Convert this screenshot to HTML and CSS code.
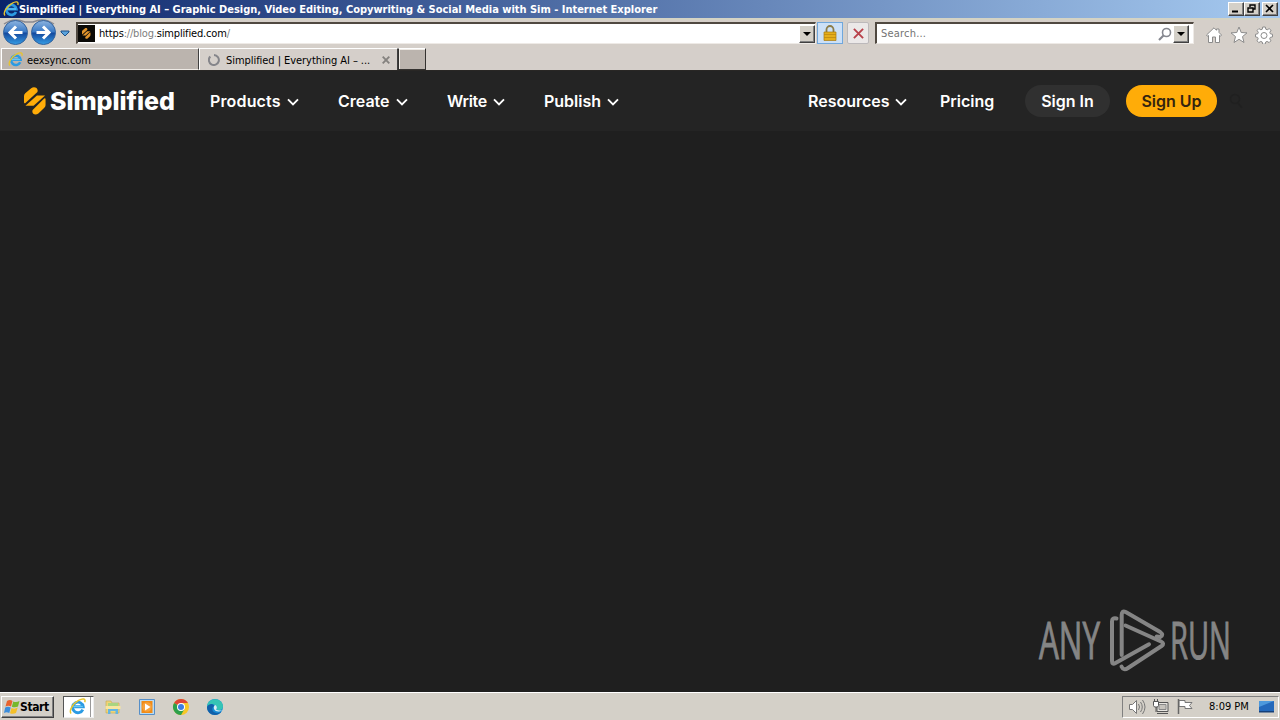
FILE: index.html
```html
<!DOCTYPE html>
<html lang="en">

<head>
    <meta charset="UTF-8">
    <title>Simplified</title>
    <link rel="stylesheet" href="styles.css">
</head>

<body>
    <!-- Shared icons -->
    <svg class="defs" width="0" height="0">
        <symbol id="ie" viewBox="0 0 16 16">
            <path d="M13 11A5 5 0 1 1 13.400 8.200H5" fill="none" stroke="#2b9be3" stroke-width="2.700"/>
            <path d="M4 8h9" stroke="#66c8f5" stroke-width="1.200"/>
            <path d="M2 14.500C-.5 12 4 5 9 2.300 13-.1 16 .5 14.800 4" fill="none" stroke="#e8c52c" stroke-width="1.400"/>
        </symbol>
        <symbol id="bolt" viewBox="0 0 24 29">
            <path d="M0 9.500a4 4 0 0 1 1.300-3L7.500 1.300C10.500-1.200 15.500 1 14 5L1.500 16.500Q0 17.500 0 15.500z"/>
            <path d="M1.500 19.500 13.500 8.800H22L10 19.500z"/>
            <path d="M22.500 18.500a4 4 0 0 1-1.300 3L15 27.500C12 30 7.500 28 9 24L21 12q1.500-1 1.500 1z"/>
        </symbol>
        <symbol id="chevron" viewBox="0 0 12 8">
            <path d="M1 1.300 6 6.300 11 1.300" fill="none" stroke="#fff" stroke-width="1.900"/>
        </symbol>
        <symbol id="flag" viewBox="0 0 16 16">
            <path d="M3 2Q6 0 8.500 2L7 7.500Q4.500 6 1.500 7.500z" fill="#e8622d"/>
            <path d="M9.300 2.400Q12 4 15.500 2L14 7.500Q11 9 7.800 7.700z" fill="#76b82a"/>
            <path d="M1.200 8.500Q4 7 6.700 8.500L5.300 14Q2.500 12.500 0 14z" fill="#3c8ddb"/>
            <path d="M7.500 8.900Q10.500 10.500 13.700 8.600L12 14Q9 15.500 6 14.200z" fill="#f5c028"/>
        </symbol>
    </svg>

    <!-- Title bar -->
    <header class="titlebar">
        <svg class="title-icon"><use href="#ie"/></svg>
        <span class="title">Simplified | Everything AI – Graphic Design, Video Editing, Copywriting &amp; Social Media with Sim - Internet Explorer</span>
        <div class="window-buttons">
            <span class="win-btn"><svg viewBox="0 0 13 11"><path d="M3 8.500h6" stroke="#000" stroke-width="2"/></svg></span>
            <span class="win-btn"><svg viewBox="0 0 13 11"><path d="M5 4V2h5v4H8M5 2h5M3 5h5v4H3zM3 5h5" fill="none" stroke="#000" stroke-width="1.400"/></svg></span>
            <span class="win-btn close"><svg viewBox="0 0 13 11"><path d="m3 2 7 7m0-7-7 7" stroke="#000" stroke-width="1.600"/></svg></span>
        </div>
    </header>

    <!-- Navigation row -->
    <div class="toolbar">
        <svg class="arrows" viewBox="0 0 58 28">
            <defs>
                <linearGradient id="ball" x2="0" y2="1">
                    <stop offset="0" stop-color="#8db4df"/>
                    <stop offset=".48" stop-color="#3878c5"/>
                    <stop offset=".52" stop-color="#14489d"/>
                    <stop offset="1" stop-color="#369de5"/>
                </linearGradient>
            </defs>
            <path d="M4 5Q14-2 25 3h8Q44-2 54 5" fill="none" stroke="#8b8b91" stroke-width="1.500"/>
            <circle cx="15.500" cy="13.500" r="12" fill="url(#ball)" stroke="#34639d"/>
            <circle cx="43.500" cy="13.500" r="12" fill="url(#ball)" stroke="#34639d"/>
            <path d="M22.500 13.500h-12m5.500-6-6 6 6 6M36.500 13.500h12m-5.500-6 6 6-6 6" fill="none" stroke="#fff" stroke-width="3"/>
        </svg>
        <svg class="history" viewBox="0 0 10 7"><path d="M1 1h8v1L5 6 1 2z" fill="#5aa3dc" stroke="#1c4f88"/></svg>
        <div class="address">
            <span class="favicon"><svg viewBox="0 0 24 29"><use href="#bolt"/></svg></span>
            <span class="url"><b>https</b>://blog.<b>simplified.com</b>/</span>
            <span class="drop"><i></i></span>
        </div>
        <span class="lock">
            <svg viewBox="0 0 14 16">
                <path d="M3.500 8V4.500a3.500 3.500 0 0 1 7 0V8" fill="none" stroke="#8c7c48" stroke-width="1.800"/>
                <path d="M1 7h12v8.500H1z" fill="#e5ae1c" stroke="#a87a10" stroke-width=".7"/>
                <path d="M1 9.500h12M1 12.500h12" stroke="#b98410" stroke-width=".7"/>
            </svg>
        </span>
        <span class="stop"><svg viewBox="0 0 12 12"><path d="m1 1 10 10m0-10L1 11" stroke="#b8414b" stroke-width="2.100"/></svg></span>
        <div class="search">
            <span class="hint">Search...</span>
            <svg class="glass" viewBox="0 0 14 14"><circle cx="8.500" cy="5.500" r="4" fill="none" stroke="#85878f" stroke-width="1.600"/><path d="M5.500 8.500 1 13" stroke="#85878f" stroke-width="2.200"/></svg>
            <span class="drop"><i></i></span>
        </div>
        <div class="tools">
            <svg viewBox="0 0 18 18"><path d="M1.500 9 9 1.800l2.500 2.500V3h2.500v3.500L16.500 9l-1 1.200-1-.8V16.500h-4V11h-3v5.500h-4V9.400l-1 .8z"/></svg>
            <svg viewBox="0 0 18 18"><path d="m9 1 2.200 5.500 5.800.4-4.500 3.700L14 16.500l-5-3.200-5 3.200 1.500-5.900L1 6.900l5.800-.4z"/></svg>
            <svg viewBox="0 0 18 18"><path d="M7.700 1h2.600l.5 2.200 1.400.6 2-1.200 1.800 1.800-1.200 2 .6 1.400 2.100.5v2.600l-2.200.5-.6 1.400 1.200 2-1.800 1.800-2-1.200-1.400.6-.5 2.200H7.700l-.5-2.200-1.400-.6-2 1.200L2 14.800l1.200-2-.6-1.400-2.100-.5V8.300l2.200-.5.6-1.400-1.200-2 1.800-1.800 2 1.200 1.400-.6z"/><circle cx="9" cy="9.500" r="3"/></svg>
        </div>
    </div>

    <!-- Tabs -->
    <div class="tabs">
        <div class="tab inactive">
            <svg class="tab-icon"><use href="#ie"/></svg>
            <span class="tab-one">eexsync.com</span>
        </div>
        <div class="tab active">
            <svg class="spinner" viewBox="0 0 12 12"><path d="M2.300 2.500A5 5 0 1 0 6 1" fill="none" stroke="#85858a" stroke-width="2"/></svg>
            <span class="tab-two">Simplified | Everything AI – ...</span>
            <svg class="tab-close" viewBox="0 0 8 8"><path d="m.7.700 6.600 6.600m0-6.600L.7 7.300" stroke="#85827f" stroke-width="1.900"/></svg>
        </div>
        <div class="new-tab"></div>
    </div>

    <!-- Web page -->
    <main class="page">
        <nav class="site-nav">
            <svg class="brand-icon"><use href="#bolt"/></svg>
            <span class="brand">Simplified</span>
            <a class="item products">Products<svg><use href="#chevron"/></svg></a>
            <a class="item create">Create<svg><use href="#chevron"/></svg></a>
            <a class="item write">Write<svg><use href="#chevron"/></svg></a>
            <a class="item publish">Publish<svg><use href="#chevron"/></svg></a>
            <a class="item resources">Resources<svg><use href="#chevron"/></svg></a>
            <a class="item pricing">Pricing</a>
            <a class="pill signin">Sign In</a>
            <a class="pill signup">Sign Up</a>
            <svg class="site-search" viewBox="0 0 14 16"><circle cx="6" cy="6" r="4.500"/><path d="m9 10 4 5"/></svg>
        </nav>
        <!-- Watermark -->
        <svg class="watermark" viewBox="0 0 200 64">
            <text x="2" y="51" textLength="61" lengthAdjust="spacingAndGlyphs">ANY</text>
            <g fill="none" stroke="#858585" stroke-width="4" stroke-linejoin="round" stroke-linecap="round">
                <path d="M79.500 10.500q-4.500-1-4.500 3V53q0 4 3.500 2L112 36.300"/>
                <path d="M84.700 47V7q0-5 4-3l34.500 20q4 3 0 5l-3.500-.5"/>
                <path d="m88.500 17.500 35.500 16q4 2 .5 4.500L91 60q-4.500 3-6.500-1.500"/>
            </g>
            <text x="133" y="51" textLength="61" lengthAdjust="spacingAndGlyphs">RUN</text>
        </svg>
    </main>

    <!-- Taskbar -->
    <footer class="taskbar">
        <div class="start"><svg><use href="#flag"/></svg><span>Start</span></div>
        <div class="task-active"><svg><use href="#ie"/></svg><i></i></div>
        <div class="quick">
            <svg viewBox="0 0 18 18"><path d="M2 3h5l1 2h7v10H2z" fill="#f0d477" stroke="#c1a950" stroke-width=".6"/><path d="M4 5h10v4H4z" fill="#a9d580"/><path d="M1.500 8h15v3H1.500z" fill="#f7e6a1"/><path d="M4 16v-5h10v5h-2.500v-3h-5v3z" fill="#63b5e2"/></svg>
            <svg viewBox="0 0 18 18"><path d="M1.500 1.500h15v15h-15z" fill="#b9dbf3" stroke="#568fc8"/><path d="M3.500 3h11v12h-11z" fill="#f18b16"/><circle cx="9" cy="9" r="4.800" fill="#f7a13a"/><path d="m7 5.500 5.500 3.500L7 12.500z" fill="#fff"/></svg>
            <svg viewBox="0 0 18 18"><circle cx="9" cy="9" r="8" fill="#f7c726"/><path d="M9 9 2.070 5A8 8 0 0 1 15.930 5H9z" fill="#dd4537"/><path d="M2.070 5A8 8 0 0 0 9 17l3.500-6L9 9z" fill="#2da04c"/><circle cx="9" cy="9" r="4" fill="#fff"/><circle cx="9" cy="9" r="3" fill="#3c7de2"/></svg>
            <svg viewBox="0 0 18 18"><circle cx="9" cy="9" r="8" fill="#168bd5"/><path d="M1.200 7.500C2.500-1 16-1 17 8c.2 4-4 5-6.500 3.500 1-2 0-4.500-3-5C5 6 2 7 1.200 9z" fill="#35c4b5"/><path d="M1 9c2-4 7-3.500 7-1-3 2-2 7 3 7 2 0 3.500-.8 4.500-1.500C12 19 1 18 1 9z" fill="#1160a9"/><path d="M10 11.500c1.500-1 1-4-1-4.500-3 3 0 7 4 6.500 1.500-.2 3-1 3.500-1.500-2 .8-4.500.8-6.500-.5z" fill="#d9eef2"/></svg>
        </div>
        <div class="tray">
            <svg viewBox="0 0 18 18"><path d="M1.500 6.500h3l4-4v13l-4-4h-3z" fill="#fff" stroke="#777"/><path d="M10.500 6q2 3 0 6m2-8q3.500 5 0 10m2-12q5 7 0 14" fill="none" stroke="#777"/></svg>
            <svg viewBox="0 0 18 18"><path d="M5 4.500h11v9H5zM5 15.500h11" fill="#e8e6e1" stroke="#555"/><path d="M7 6.500h7v5H7z" fill="#c6c3bd" stroke="#888"/><path d="M1.500 3.500h5v4l-1 1.500h-3l-1-1.500zM2.500 1v3m3-3v3M4 9v5" fill="#fff" stroke="#555"/></svg>
            <svg viewBox="0 0 18 18"><path d="M3 2.500h6v2h7l-2.500 3 2.500 3H9v-2H3z" fill="#fff" stroke="#777"/><path d="M2.500 1v15" stroke="#666" stroke-width="1.500"/></svg>
            <time>8:09 PM</time>
            <svg class="desktop" viewBox="0 0 18 18"><path d="M2 3h15v10H2z" fill="#2469bb"/><path d="M2 3h15L2 9z" fill="#4d99dc"/><path d="M2 13h15v1.500H2z" fill="#164079"/></svg>
        </div>
    </footer>
</body>

</html>
```
FILE: styles.css
```css
* {
    box-sizing: border-box;
}

body {
    margin: 0;
    width: 1280px;
    height: 720px;
    overflow: hidden;
    display: flex;
    flex-direction: column;
    background: #d4d0c8;
    font: 11px "DejaVu Sans Condensed", "DejaVu Sans", sans-serif;
    color: #000;
    white-space: nowrap;
}

svg {
    display: block;
    flex: none;
}

.defs {
    position: absolute;
}

/* Title bar */
.titlebar {
    height: 18px;
    flex: none;
    display: flex;
    align-items: center;
    padding: 0 2px 0 3px;
    background: linear-gradient(to right, #0a246a, #a6caf0);
    color: #fff;
    font-weight: bold;
}

.title-icon {
    width: 16px;
    height: 16px;
}

.title {
    letter-spacing: -0.01px;
}

.window-buttons {
    display: flex;
    margin-left: auto;
}

.win-btn {
    width: 16px;
    height: 14px;
    background: #d4d0c8;
    border: 1px solid;
    border-color: #fff #404040 #404040 #fff;
    box-shadow: inset -1px -1px #808080;
}

.win-btn svg {
    width: 13px;
    height: 11px;
}

.close {
    margin-left: 2px;
}

/* Address row */
.toolbar {
    height: 30px;
    flex: none;
    display: flex;
    align-items: center;
    padding-bottom: 2px;
    background: #d5cfc9;
    border-top: 2px solid #d4d3c4;
}

.arrows {
    width: 58px;
    height: 28px;
}

.history {
    width: 10px;
    height: 7px;
    margin: 0 6px 0 2px;
}

.address,
.search {
    height: 22px;
    display: flex;
    align-items: center;
    background: #fff;
    border: 1px solid #eeeae6;
    border-top: 2px solid #504941;
    border-left: 2px solid #504941;
}

.address {
    width: 740px;
}

.favicon {
    width: 17px;
    height: 17px;
    margin-right: 4px;
    background: #0b0a08;
}

.favicon svg {
    width: 11px;
    height: 11px;
    margin: 3px;
    fill: #e2942c;
}

.url {
    color: #808080;
    letter-spacing: -0.17px;
}

.url b {
    color: #000;
    font-weight: normal;
}

.drop {
    width: 16px;
    height: 18px;
    margin-left: auto;
    display: flex;
    align-items: center;
    justify-content: center;
    background: #d4d0c8;
    border: 1px solid;
    border-color: #fff #404040 #404040 #fff;
    box-shadow: inset -1px -1px #808080;
}

.drop i {
    border: 4px solid transparent;
    border-top-color: #000;
    border-bottom: 0;
}

.lock {
    width: 26px;
    height: 22px;
    margin-left: 1px;
    padding: 2px 5px;
    background: #cce0f7;
    border: 1px solid #70a7dc;
}

.lock svg {
    width: 14px;
    height: 16px;
}

.stop {
    width: 22px;
    height: 22px;
    margin-left: 4px;
    padding: 5px;
    background: #ebe8e8;
    border: 1px solid #bcb9bb;
    border-radius: 2px;
}

.stop svg {
    width: 11px;
    height: 11px;
}

.search {
    width: 319px;
    margin-left: 6px;
    padding: 0 4px 0 4px;
}

.hint {
    color: #737373;
    letter-spacing: 0.2px;
}

.glass {
    width: 14px;
    height: 14px;
    margin-left: auto;
}

.search .drop {
    margin-left: 1px;
}

.tools {
    display: flex;
    gap: 7px;
    margin: 3px 0 0 11px;
}

.tools svg {
    width: 18px;
    height: 18px;
    fill: #fff;
    stroke: #8b8b8b;
    stroke-width: 1;
}

/* Tabs */
.tabs {
    height: 23px;
    flex: none;
    display: flex;
    background: #d5cfca;
    border-bottom: 1px solid #292725;
}

.tab {
    display: flex;
    align-items: center;
    height: 22px;
    border-top: 1px solid #fff;
    border-left: 1px solid #fff;
    border-right: 1px solid #404040;
    padding-top: 1px;
}

.inactive {
    width: 198px;
    margin-left: 1px;
    background: #bbb4ae;
    border-bottom: 1px solid #eeeae5;
}

.active {
    width: 199px;
}

.tab-icon {
    width: 15px;
    height: 15px;
    margin: 0 4px 0 6px;
}

.tab-one {
    padding-top: 1px;
    letter-spacing: -0.1px;
}

.tab-two {
    letter-spacing: -0.05px;
}

.spinner {
    width: 12px;
    height: 12px;
    margin: 0 6px 0 8px;
}

.tab-close {
    width: 8px;
    height: 8px;
    margin-left: auto;
    margin-right: 7px;
}

.new-tab {
    width: 28px;
    height: 22px;
    background: #bbb4ae;
    border: 1px solid #343230;
    border-top-color: #fff;
    box-shadow: inset 1px 1px #efebe6;
}

/* Web page */
.page {
    flex: 1;
    display: flex;
    flex-direction: column;
    background: #1f1f1f;
}

.site-nav {
    height: 60px;
    display: flex;
    align-items: center;
    padding-left: 24px;
    padding-bottom: 1px;
    background: #242424;
    color: #fff;
    font: 600 16px Inter, sans-serif;
}

.brand-icon {
    width: 23px;
    height: 28px;
    fill: #ffac08;
}

.brand {
    width: 125px;
    margin: 0 35px 0 3px;
    font-size: 25px;
    font-weight: 800;
    letter-spacing: -0.05px;
}

.item {
    display: flex;
    align-items: center;
    justify-content: space-between;
}

.item svg {
    width: 12px;
    height: 8px;
    margin-top: 2px;
}

.products {
    width: 89px;
    margin-right: 39px;
    letter-spacing: 0.15px;
}

.create {
    width: 70px;
    margin-right: 39px;
}

.write {
    width: 58px;
    margin-right: 39px;
    letter-spacing: -0.3px;
}

.publish {
    width: 75px;
}

.resources {
    width: 99px;
    margin-left: auto;
    margin-right: 33px;
}

.pricing {
    width: 55px;
    margin-right: 30px;
}

.pill {
    height: 32px;
    display: flex;
    align-items: center;
    justify-content: center;
    border-radius: 16px;
}

.signin {
    width: 85px;
    background: #303030;
}

.signup {
    width: 91px;
    margin-left: 16px;
    background: #ffac08;
    color: #33240f;
}

.site-search {
    width: 14px;
    height: 16px;
    margin: 0 37px 0 12px;
    fill: none;
    stroke: #202020;
    stroke-width: 1.5;
}

.watermark {
    width: 200px;
    height: 64px;
    margin: auto 43px 20px auto;
}

.watermark text {
    font: 51px "Open Sans", sans-serif;
    fill: #858585;
    stroke: #858585;
    stroke-width: 1;
}

/* Taskbar */
.taskbar {
    height: 28px;
    flex: none;
    display: flex;
    align-items: center;
    background: #d4d0c8;
    border-top: 1px solid #fff;
}

.start {
    width: 53px;
    height: 22px;
    margin-left: 1px;
    display: flex;
    align-items: center;
    padding-left: 2px;
    border: 1px solid;
    border-color: #fff #404040 #404040 #fff;
    box-shadow: inset -1px -1px #808080;
    font-size: 12px;
    font-weight: bold;
    letter-spacing: -0.4px;
}

.start svg {
    width: 16px;
    height: 16px;
}

.task-active {
    width: 31px;
    height: 22px;
    margin-left: 9px;
    display: flex;
    align-items: center;
    justify-content: space-between;
    padding: 0 0 0 5px;
    background: #fff;
    border: 1px solid #eee;
    border-top-color: #555;
    border-left-color: #555;
}

.task-active svg {
    width: 17px;
    height: 17px;
}

.task-active i {
    width: 3px;
    height: 20px;
    border-left: 1px solid #999;
}

.quick {
    display: flex;
    gap: 16px;
    margin-left: 10px;
}

.quick svg {
    width: 18px;
    height: 18px;
}

.tray {
    width: 157px;
    height: 22px;
    margin-left: auto;
    margin-right: 1px;
    display: flex;
    align-items: center;
    gap: 6px;
    padding-left: 5px;
    border: 1px solid;
    border-color: #808080 #fff #fff #808080;
}

.tray svg {
    width: 18px;
    height: 18px;
}

.tray time {
    width: 42px;
    margin-left: 9px;
}
```
